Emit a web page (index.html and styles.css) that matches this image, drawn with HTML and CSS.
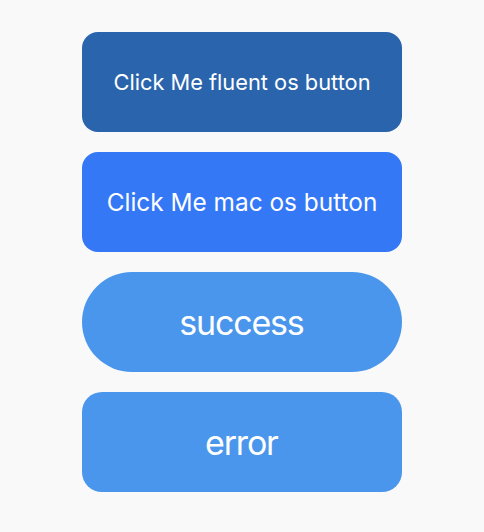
FILE: index.html
```html
<!DOCTYPE html>
<html>
<head>
<meta charset="utf-8">
<link rel="stylesheet" href="styles.css">
</head>
<body>
<div class="stack">
  <button class="btn fluent">Click Me fluent os button</button>
  <button class="btn mac">Click Me mac os button</button>
  <button class="btn pill big">success</button>
  <button class="btn round big">error</button>
</div>
</body>
</html>
```
FILE: styles.css
```css
html, body {
  margin: 0;
  padding: 0;
  background: #f9f9fa;
}
body {
  font-family: Inter, "Noto Sans", sans-serif;
}
.stack {
  display: flex;
  flex-direction: column;
  align-items: center;
  gap: 20px;
  padding-top: 32px;
}
.btn {
  width: 320px;
  height: 100px;
  border: none;
  color: #fff;
  font-family: Inter, "Noto Sans", sans-serif;
  display: flex;
  align-items: center;
  justify-content: center;
  padding: 0;
}
.fluent {
  background: #2a64ad;
  border-radius: 16px;
  font-size: 21.8px;
}
.mac {
  background: #3478f6;
  border-radius: 16px;
  font-size: 24.4px;
}
.big {
  background: #4a96ec;
  font-size: 34px;
  letter-spacing: -1.2px;
  text-indent: -1.2px;
}
.pill { border-radius: 50px; }
.round { border-radius: 20px; }
```
